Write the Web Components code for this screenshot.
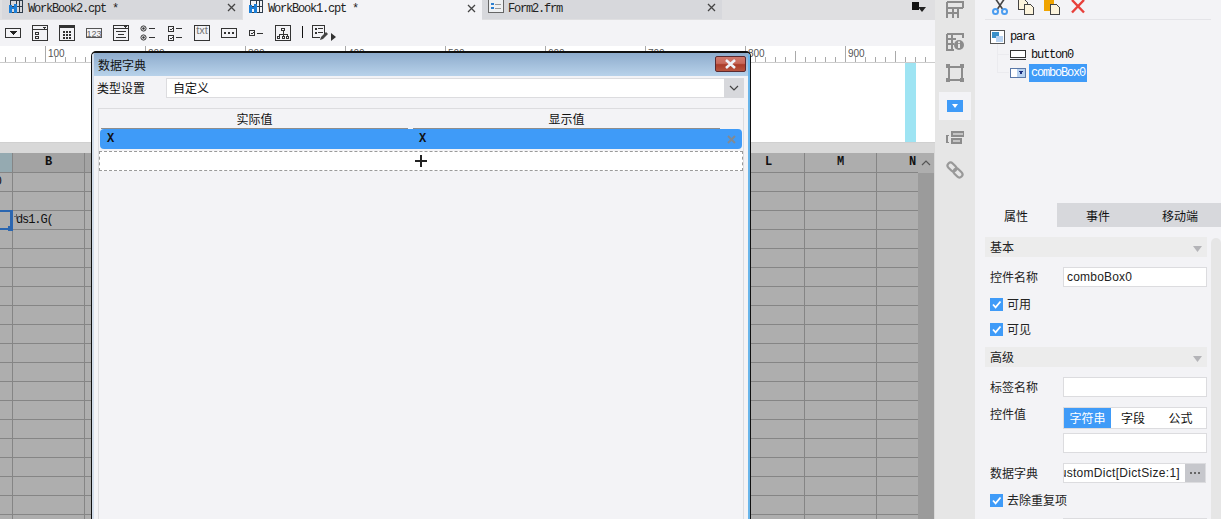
<!DOCTYPE html>
<html lang="en">
<head>
<meta charset="UTF-8">
<title>FineReport</title>
<style>
    html, body { margin: 0; height: 519px; overflow: hidden; background: #f3f3f6; }
</style>
</head>
<body>
<app-shell>
    <main-area slot="main">
        <tab-bar>
            <doc-tab title="WorkBook2.cpt *" kind="cpt"></doc-tab>
            <doc-tab title="WorkBook1.cpt *" kind="cpt" active></doc-tab>
            <doc-tab title="Form2.frm" kind="frm"></doc-tab>
        </tab-bar>
        <widget-toolbar></widget-toolbar>
        <ruler-bar></ruler-bar>
        <form-canvas></form-canvas>
        <sheet-grid></sheet-grid>
    </main-area>
    <side-rail slot="rail"></side-rail>
    <right-panel slot="right">
        <tree-tools></tree-tools>
        <widget-tree></widget-tree>
        <prop-tabs></prop-tabs>
        <prop-body>
            <prop-header>基本</prop-header>
            <prop-row label="控件名称" style="margin-top:10px"><prop-input value="comboBox0"></prop-input></prop-row>
            <check-row style="margin-top:7px">可用</check-row>
            <check-row style="margin-top:5px">可见</check-row>
            <prop-header style="margin-top:8px">高级</prop-header>
            <prop-row label="标签名称" style="margin-top:10px"><prop-input></prop-input></prop-row>
            <prop-row label="控件值" style="margin-top:10px">
                <seg-switch></seg-switch>
                <prop-input></prop-input>
            </prop-row>
            <prop-row label="数据字典" style="margin-top:10px"><dict-input value="customDict[DictSize:1]"></dict-input></prop-row>
            <check-row style="margin-top:7px">去除重复项</check-row>
            <prop-row label="" style="margin-top:8px"><prop-input></prop-input></prop-row>
        </prop-body>
    </right-panel>
    <dict-dialog slot="over"></dict-dialog>
</app-shell>

<script>
    const CJK = '"Noto Sans CJK SC", "Liberation Sans", sans-serif';
    const MONO = '"Liberation Mono", "Noto Sans CJK SC", monospace';
    const SANS = '"Liberation Sans", sans-serif';

    // every element here is just markup + styles, so one small base class does it
    class Part extends HTMLElement {
        constructor() {
            super();
            this.attachShadow({mode: 'open'});
        }
        connectedCallback() {
            this.shadowRoot.innerHTML = '<style>' + this.css() + '</style>' + this.html();
        }
        css() { return ':host{display:block}'; }
        html() { return '<slot></slot>'; }
        attr(name) { return this.getAttribute(name) || ''; }
    }

    const svg = (w, h, body, extra) => `<svg width="${w}" height="${h}" viewBox="0 0 ${w} ${h}" ${extra || ''}>${body}</svg>`;

    class AppShell extends Part {
        css() {
            return `:host{display:grid;grid-template-columns:935px 40px 246px;width:1221px;height:519px;overflow:hidden;position:relative}
            .over{position:absolute;left:91px;top:51px}`;
        }
        html() {
            return `<slot name="main"></slot><slot name="rail"></slot><slot name="right"></slot><div class="over"><slot name="over"></slot></div>`;
        }
    }

    class MainArea extends Part {
        css() { return `:host{display:flex;flex-direction:column;height:519px;overflow:hidden;background:#f3f3f6}`; }
    }

    class TabBar extends Part {
        css() { return `:host{display:flex;height:20px;padding-left:2px;background:#dfdfe1;position:relative;font:12px ${MONO}}
            .corner{position:absolute;left:912px;top:2px}`; }
        html() {
            return `<slot></slot><div class="corner">${svg(14, 10, '<rect x="0" y="0" width="7" height="8" fill="#111"/><path d="M6 5h8l-4 5z" fill="#222"/>')}</div>`;
        }
    }

    class DocTab extends Part {
        css() {
            return `:host{display:flex;align-items:center;width:240px;height:19px;background:#d7d8dc;color:#222;position:relative;overflow:hidden}
            :host([active]){background:#f3f3f6;height:20px;margin-left:1px;width:239px}
            :host([active]) .ico{margin-left:5px}
            .ico{width:16px;height:16px;margin:-4px 4px 0 6px;flex:none}
            .t{font:12px ${MONO};letter-spacing:-1.2px;white-space:pre;margin-top:-2px}
            .x{margin-left:auto;margin-right:6px;margin-top:-1px;flex:none}`;
        }
        html() {
            const cpt = `<g shape-rendering="crispEdges"><path d="M2.5 -2V12M2.5 .5H14.5V12.5H2.5M8.5 -2V12.5M2.5 6.5H14.5M11.5 0V12.5" fill="none" stroke="#2f3d4c"/>
                <rect x="1" y="5" width="3" height="8" fill="#1c7ed6"/><rect x="6" y="4" width="3" height="9" fill="#1c7ed6"/><rect x="4" y="7" width="2" height="2" fill="#1c7ed6"/></g>`;
            const frm = `<g shape-rendering="crispEdges"><rect x=".5" y="-1" width="15" height="13.5" fill="#eef0f2" stroke="#666"/><rect x="3" y="3" width="3" height="2" fill="#2b7fd0"/><rect x="3" y="7" width="3" height="2" fill="#2b7fd0"/><path d="M7 4h6M7 8h6" stroke="#999"/></g>`;
            const close = svg(9, 9, '<path d="M1 1l7 7M8 1l-7 7" stroke="#444" stroke-width="1.3" fill="none"/>');
            return `<span class="ico">${svg(16, 16, this.attr('kind') === 'cpt' ? cpt : frm)}</span>
                <span class="t">${this.attr('title')}</span><span class="x">${close}</span>`;
        }
    }

    class WidgetToolbar extends Part {
        css() {
            return `:host{display:flex;align-items:center;gap:11px;height:26px;padding-left:5px;background:#f3f3f6}
            svg{display:block;flex:none} text{font-family:${SANS}}
            .sep{width:1px;height:12px;background:#111;margin-right:-2px;margin-top:-2px}
            .more{margin-left:-8px;margin-top:8px}`;
        }
        html() {
            const s = 'fill="none" stroke="#333"';
            const ic = (b) => svg(16, 16, `<g shape-rendering="crispEdges">${b}</g>`);
            const dots = [3, 6, 9].map(y => [4, 7, 10].map(x => `<rect x="${x}" y="${y + 3}" width="2" height="2" fill="#333"/>`).join('')).join('');
            return [
                ic(`<rect x=".5" y="3.5" width="15" height="9" ${s}/><path d="M5 6h7l-3.5 4z" fill="#222"/>`),
                ic(`<rect x=".5" y=".5" width="15" height="15" ${s}/><path d="M1 4.5h14" ${s}/><path d="M10 2h4l-2 2z" fill="#333"/><rect x="3.5" y="7.5" width="3" height="2" ${s}/><rect x="3.5" y="11.5" width="3" height="2" ${s}/>`),
                ic(`<rect x=".5" y=".5" width="15" height="15" ${s}/><rect x="1" y="1" width="14" height="2" fill="#333"/>${dots}`),
                ic(`<rect x=".5" y="3.5" width="15" height="9" fill="none" stroke="#555"/>`).replace('</svg>', `<text x="8" y="11.5" font-size="9" text-anchor="middle" fill="#666">123</text></svg>`),
                ic(`<rect x=".5" y=".5" width="15" height="15" ${s}/><path d="M1 3.5h14" ${s}/><path d="M10 1h4l-2 2z" fill="#333"/><path d="M3 6.5h10M5 9.5h6M3 12.5h10" ${s}/>`),
                svg(16, 16, `<circle cx="3.5" cy="3.5" r="2.6" ${s}/><circle cx="3.5" cy="3.5" r="1.2" fill="#333"/><circle cx="3.5" cy="12.5" r="2.6" ${s}/><circle cx="3.5" cy="12.5" r="1.2" fill="#333"/><path d="M9 3.5h6M9 12.5h6" stroke="#333" shape-rendering="crispEdges"/>`),
                ic(`<rect x="1.5" y="1.5" width="5" height="5" ${s}/><rect x="1.5" y="10.5" width="5" height="5" ${s}/><path d="M3 4l1 1 2-2M3 13l1 1 2-2" ${s}/><path d="M9 3.5h6M9 12.5h6" ${s}/>`),
                ic(`<rect x=".5" y=".5" width="15" height="15" ${s}/>`).replace('</svg>', `<text x="8" y="9" font-size="11" text-anchor="middle" fill="#777">txt</text></svg>`),
                ic(`<rect x=".5" y="3.5" width="15" height="9" ${s}/><rect x="3" y="7" width="2" height="2" fill="#333"/><rect x="7" y="7" width="2" height="2" fill="#333"/><rect x="11" y="7" width="2" height="2" fill="#333"/>`),
                ic(`<rect x="1.5" y="5.5" width="5" height="5" ${s}/><path d="M3 8l1 1 2-2" ${s}/><path d="M9 8.5h6" ${s}/>`),
                ic(`<rect x=".5" y=".5" width="15" height="15" ${s}/><rect x="6.5" y="3.5" width="3" height="2" ${s}/><path d="M8 6v3M4 9h8M4 9v2M8 9v2M12 9v2" ${s}/><rect x="2.5" y="11.5" width="2" height="2" ${s}/><rect x="7" y="11.5" width="2" height="2" ${s}/><rect x="11.5" y="11.5" width="2" height="2" ${s}/>`),
                `<span class="sep"></span>`,
                ic(`<path d="M12.5 9V.5H.5V12.5H8" ${s}/><rect x="3" y="3" width="2" height="2" fill="#333"/><rect x="3" y="7" width="2" height="2" fill="#333"/><path d="M6 3.5h5M6 7.5h5" ${s}/>`).replace('</svg>', `<path d="M8 15l1-3 5-5 2 2-5 5z" fill="#444"/></svg>`),
                `<span class="more">${svg(5, 8, '<path d="M0 0l5 4-5 4z" fill="#333"/>')}</span>`
            ].join('');
        }
    }

    class RulerBar extends Part {
        css() {
            return `:host{display:flex;height:17px;box-sizing:border-box;padding-left:48px;background-color:#fff;
                background-image:linear-gradient(90deg,#aaa 1px,transparent 1px),linear-gradient(90deg,#aaa 1px,transparent 1px),linear-gradient(90deg,#aaa 1px,transparent 1px),linear-gradient(#ccc,#ccc);
                background-size:10px 5px,100px 11px,100px 16px,100% 1px;
                background-position:5px 11px,95px 5px,45px 0,0 16px;
                background-repeat:repeat-x;font:10px ${SANS};color:#555;overflow:hidden}
            span{flex:none;width:100px;line-height:11px;padding-top:2px}`;
        }
        html() { return [100, 200, 300, 400, 500, 600, 700, 800, 900].map(n => `<span>${n}</span>`).join(''); }
    }

    class FormCanvas extends Part {
        css() {
            return `:host{display:flex;height:80px;box-sizing:border-box;background:#fff;border-bottom:1px solid #d0d0d0;padding-left:905px}
            i{display:block;width:11px;background:#9ee4f3}`;
        }
        html() { return '<i></i>'; }
    }

    class SheetGrid extends Part {
        css() {
            return `:host{display:flex;flex:1;min-height:0;background:#d8d8d8;padding-top:10px;overflow:hidden}
            .clip{width:918px;overflow:hidden;flex:none}
            .g{display:grid;grid-template-columns:repeat(14,72px);grid-template-rows:20px;grid-auto-rows:19px;margin-left:-59px;width:1008px;font:12px ${MONO};color:#111}
            .c{box-sizing:border-box;border-right:1px solid #858585;border-bottom:1px solid #858585;background:#aeaeae;position:relative;white-space:pre;line-height:18px;overflow:visible}
            .h{background:#a3a3a3;text-align:center;font-weight:bold;line-height:19px}
            .h.lt{background:#adadad}
            .h.a{background:#95aab1}
            .txt{position:absolute;left:3px;top:0;letter-spacing:-1.1px}
            .a0{position:absolute;right:10px;top:0}
            .sel{position:absolute;left:-4px;right:-1px;top:-1px;bottom:-1px;border:solid #2b66b0;border-width:2px 3px 2px 0;z-index:2}
            .hd{position:absolute;right:-3px;bottom:-3px;width:5px;height:5px;background:#2b66b0}
            .mk{position:absolute;left:1px;top:3px;width:5px;height:5px;z-index:3;
                background:linear-gradient(#666,#666) 2px 0/1px 5px no-repeat,linear-gradient(#666,#666) 0 2px/5px 1px no-repeat}
            .bar{width:16px;flex:none;background:#9b9b9b;margin-right:1px}
            .up{display:flex;align-items:center;justify-content:center;height:20px;background:#aeaeae}`;
        }
        html() {
            let cells = '';
            const letters = ' BCDEFGHIJKLMN';
            for (let i = 0; i < 14; i++) {
                const cls = i === 0 ? 'a' : (i > 10 ? 'lt' : '');
                cells += `<div class="c h ${cls}">${letters[i]}</div>`;
            }
            for (let r = 0; r < 19; r++) {
                for (let c = 0; c < 14; c++) {
                    let inner = '';
                    if (r === 0 && c === 0) inner = '<span class="a0">0</span>';
                    if (r === 2 && c === 0) inner = '<div class="sel"><div class="hd"></div></div>';
                    if (r === 2 && c === 1) inner = '<div class="mk"></div><span class="txt">ds1.G(</span>';
                    cells += `<div class="c">${inner}</div>`;
                }
            }
            return `<div class="clip"><div class="g">${cells}</div></div>
                <div class="bar"><div class="up">${svg(10, 6, '<path d="M1 5l4-4 4 4" fill="none" stroke="#555" stroke-width="1.2"/>')}</div></div>`;
        }
    }

    class SideRail extends Part {
        css() {
            return `:host{display:flex;flex-direction:column;align-items:center;height:519px;background:#e6e6e6;box-sizing:border-box}
            .i{display:flex;align-items:center;justify-content:center;width:32px;flex:none}
            .on{background:#f3f3f6}
            svg{display:block}`;
        }
        html() {
            const s = 'fill="none" stroke="#8c8c8c" stroke-width="2"';
            const item = (h, body) => `<div class="i" style="height:${h}px">${svg(18, 18, body)}</div>`;
            return item(20, `<g shape-rendering="crispEdges"><path d="M1 1V17M1 1H17V7M1 7H17M1 12H12M7 7V17M12 7V17" ${s}/></g>`)
                + item(44, `<g shape-rendering="crispEdges"><path d="M1 1H17V5M1 1V17H8M1 6H10M1 11H8M6 1V17" ${s}/></g><circle cx="13" cy="12" r="5" fill="#8c8c8c"/><rect x="12" y="11" width="2" height="4" fill="#e6e6e6"/><rect x="12" y="8.5" width="2" height="1.6" fill="#e6e6e6"/>`)
                + item(18, `<g shape-rendering="crispEdges"><rect x="2.5" y="2.5" width="13" height="13" ${s}/><rect x="0" y="0" width="4" height="4" fill="#8c8c8c"/><rect x="14" y="0" width="4" height="4" fill="#8c8c8c"/><rect x="0" y="14" width="4" height="4" fill="#8c8c8c"/><rect x="14" y="14" width="4" height="4" fill="#8c8c8c"/></g>`)
                + `<div style="height:10px;flex:none"></div>`
                + `<div class="i on" style="height:28px">${svg(16, 12, '<rect width="16" height="12" fill="#3f9bf8"/><path d="M5 4h6l-3 4z" fill="#fff"/>')}</div>`
                + `<div style="height:9px;flex:none"></div>`
                + item(18, `<g shape-rendering="crispEdges"><path d="M3 6.5H.8V13.5H3" fill="none" stroke="#8c8c8c" stroke-width="1.4"/><rect x="6" y="3" width="12" height="4" fill="#c4c4c4" stroke="#8c8c8c" stroke-width="2"/><rect x="6" y="10" width="9" height="4" fill="#c4c4c4" stroke="#8c8c8c" stroke-width="2"/></g>`)
                + `<div style="height:14px;flex:none"></div>`
                + item(18, `<g fill="none" stroke="#999" stroke-width="2.2"><rect x="1" y="3" width="10" height="6" rx="3" transform="rotate(45 6 6)"/><rect x="7" y="9" width="10" height="6" rx="3" transform="rotate(45 12 12)"/></g>`);
        }
    }

    class RightPanel extends Part {
        css() { return `:host{display:flex;flex-direction:column;height:519px;background:#f3f3f6;overflow:hidden}`; }
    }

    class TreeTools extends Part {
        css() {
            return `:host{display:flex;gap:10px;height:19px;margin:0 10px;padding-left:7px;border-bottom:1px solid #e4e4e8;align-items:flex-start;overflow:hidden}
            svg{display:block;flex:none}`;
        }
        html() {
            const doc = (x, y) => `<path d="M${x + .5} ${y + .5}h6l3 3v7h-9z" fill="#fdf4dc" stroke="#444"/>`;
            return svg(16, 15, '<path d="M3 -2l7.5 11M13 -2L5.5 9" stroke="#444" stroke-width="1.6" fill="none"/><circle cx="3.5" cy="11.5" r="2.5" fill="none" stroke="#4a9cf0" stroke-width="2"/><circle cx="12.5" cy="11.5" r="2.5" fill="none" stroke="#4a9cf0" stroke-width="2"/>')
                + svg(16, 15, `<g shape-rendering="crispEdges">${doc(0, -1)}${doc(6, 4)}</g>`)
                + svg(16, 15, `<g shape-rendering="crispEdges"><rect x="0" y="0" width="10" height="11" fill="#f0a400"/>${doc(6, 4)}</g>`)
                + `<span style="margin-left:1px">${svg(14, 14, '<path d="M1 0l12 12.5M13 0L1 12.5" stroke="#e8403a" stroke-width="2.4" fill="none"/>')}</span>`;
        }
    }

    class WidgetTree extends Part {
        css() {
            return `:host{display:block;height:183px;box-sizing:border-box;padding:9px 0 0 15px;position:relative;font:12px ${MONO};color:#111}
            .r{display:flex;align-items:center;height:18px;white-space:pre}
            .r span{letter-spacing:-1.2px;padding:0 2px;line-height:18px}
            svg{display:block;flex:none}
            .lv2{padding-left:20px}
            .lv2 svg{margin-right:3px}
            .top svg{margin-right:5px}
            .top{height:16px;margin-bottom:1px}
            .top span{padding:0}
            .sel{background:#3f9bf8;color:#fff;width:58px;box-sizing:border-box}
            .guide{position:absolute;left:22px;top:24px;width:11px;height:29px;border-left:1px solid #ebebef}
            .guide:before,.guide:after{content:"";position:absolute;left:0;width:11px;border-top:1px solid #ebebef}
            .guide:before{top:10px}.guide:after{top:28px}`;
        }
        html() {
            return `<div class="guide"></div>
            <div class="r top">${svg(15, 15, '<g shape-rendering="crispEdges"><rect x=".5" y=".5" width="14" height="13" fill="#fff" stroke="#555"/><rect x="2" y="2" width="7" height="6" fill="#3a8fc8"/><rect x="6" y="6" width="7" height="6" fill="#b8d2f0"/></g>')}<span>para</span></div>
            <div class="r lv2">${svg(16, 11, '<g shape-rendering="crispEdges"><rect x=".5" y=".5" width="15" height="7" fill="#fff" stroke="#333"/><path d="M0 9.5h16" stroke="#333"/></g>')}<span>button0</span></div>
            <div class="r lv2">${svg(16, 11, '<g shape-rendering="crispEdges"><rect x=".5" y=".5" width="15" height="9" fill="#fff" stroke="#5a78a8"/><rect x="7" y="1" width="8" height="8" fill="#b8d2f0"/><path d="M8.5 3h5l-2.5 3.5z" fill="#1c2f80"/></g>')}<span class="sel">comboBox0</span></div>`;
        }
    }

    class PropTabs extends Part {
        css() {
            return `:host{display:grid;grid-template-columns:82px 82px 82px;height:24px;font:12px ${CJK};color:#111}
            div{display:flex;align-items:center;justify-content:center;background:#d7d8dc}
            .on{background:#f3f3f6}`;
        }
        html() { return '<div class="on">属性</div><div>事件</div><div>移动端</div>'; }
    }

    class PropBody extends Part {
        css() {
            return `:host{display:flex;flex:1;padding:10px 0 0 10px;gap:4px;min-height:0;overflow:hidden;font:12px ${CJK};color:#222}
            .col{width:222px;flex:none}
            .sb{width:10px;flex:none;margin-top:1px;background:#e6e6e6;border-radius:5px 5px 0 0;height:300px}`;
        }
        html() { return '<div class="col"><slot></slot></div><div class="sb"></div>'; }
    }

    class PropHeader extends Part {
        css() {
            return `:host{display:flex;align-items:center;justify-content:space-between;height:20px;box-sizing:border-box;padding:0 5px 2px 5px;background:#ececec}
            svg{display:block;margin-top:6px}`;
        }
        html() { return `<slot></slot>${svg(9, 6, '<path d="M0 0h9l-4.5 6z" fill="#b4b4b8"/>')}`; }
    }

    class PropRow extends Part {
        css() {
            return `:host{display:grid;grid-template-columns:73px 144px;padding-left:5px}
            .l{line-height:14px;padding-top:3px;white-space:nowrap}
            :host([label="控件值"]) .l{padding-top:0}
            .f{display:flex;flex-direction:column;gap:4px}`;
        }
        html() { return `<div class="l">${this.attr('label')}</div><div class="f"><slot></slot></div>`; }
    }

    class PropInput extends Part {
        css() {
            return `:host{display:block;height:20px;box-sizing:border-box;background:#fff;border:1px solid #dcdcdf;font:12px ${SANS};color:#222;letter-spacing:.2px;line-height:18px;padding-left:3px;overflow:hidden;white-space:nowrap}`;
        }
        html() { return this.attr('value'); }
    }

    class DictInput extends Part {
        css() {
            return `:host{display:flex;height:20px;width:143px;box-sizing:border-box;border:1px solid #dcdcdf;background:#fff;font:12px ${SANS};color:#222;letter-spacing:.3px}
            .t{flex:1;min-width:0;display:flex;justify-content:flex-end;overflow:hidden;white-space:nowrap;line-height:18px;padding:0 5px 0 2px}
            .b{width:20px;flex:none;background:#c6c7cc;display:flex;align-items:center;justify-content:center;gap:2px}
            .b i{width:2px;height:2px;background:#666}`;
        }
        html() { return `<div class="t"><span>${this.attr('value')}</span></div><div class="b"><i></i><i></i><i></i></div>`; }
    }

    class SegSwitch extends Part {
        css() {
            return `:host{display:grid;grid-template-columns:47px 44px 1fr;height:22px;box-sizing:border-box;border:1px solid #dcdcdf;background:#fff;color:#111;font:12px ${CJK}}
            div{display:flex;align-items:center;justify-content:center;padding-bottom:1px}
            .on{background:#3f9bf8;color:#fff}`;
        }
        html() { return '<div class="on">字符串</div><div>字段</div><div>公式</div>'; }
    }

    class CheckRow extends Part {
        css() {
            return `:host{display:flex;align-items:center;gap:4px;height:20px;padding-left:5px;line-height:18px}
            svg{display:block;flex:none}
            span{display:block;margin-top:-1px}`;
        }
        html() {
            return `${svg(13, 13, '<rect width="13" height="13" fill="#3f9bf8"/><path d="M3 6.5l2.6 2.8L10.5 3.5" fill="none" stroke="#fff" stroke-width="1.8"/>')}<span><slot></slot></span>`;
        }
    }

    class DictDialog extends Part {
        css() {
            return `:host{display:block;width:660px;height:500px;box-sizing:border-box;background:#f3f3f6;border:solid #111;border-width:2px 1px 0 1px;border-radius:5px 5px 0 0;font:12px ${CJK};color:#111;overflow:hidden}
            .frame{height:100%;box-sizing:border-box;border-left:2px solid #d3ddea;border-right:2px solid #69b5ea}
            .title{display:flex;align-items:center;justify-content:space-between;height:23px;padding:0 2px 0 4px;background:linear-gradient(#8eaccd,#b8d2ea)}
            .close{display:flex;align-items:center;justify-content:center;width:31px;height:16px;box-sizing:border-box;margin-top:-2px;border:1px solid #5a2a30;border-radius:2px;background:linear-gradient(#d0786c 0,#c96a5c 45%,#aa3c2a 55%,#b8543f 100%)}
            .close svg{display:block}
            .type{display:flex;align-items:center;height:21px;margin-top:1px;padding:0 4px 0 3px}
            .type label{width:69px;flex:none}
            .sel{flex:1;display:flex;height:20px;box-sizing:border-box;border:1px solid #dcdcdf;background:#fff;align-items:center;padding-left:6px;justify-content:space-between;position:relative}
            .dd{position:absolute;right:-1px;top:-1px;bottom:-1px;width:20px;background:#d7d8dc;display:flex;align-items:center;justify-content:center}
            .tbl{margin:10px 4px 0 4px;height:500px;border:1px solid #dcdcdf;box-sizing:border-box;padding:0 1px}
            .head{display:grid;grid-template-columns:312px 312px;height:20px;text-align:center;line-height:20px}
            .head span{display:block;border-bottom:1px solid #8d8d8d;box-sizing:border-box;height:20px;margin:0 4px 0 1px}
            .row{display:grid;grid-template-columns:312px 1fr;align-items:center;height:20px;background:#3f9bf8;color:#111;border-radius:4px;font:bold 12px ${MONO};position:relative}
            .row span{padding-left:7px}
            .del{position:absolute;right:6px;top:5px}
            .add{display:flex;align-items:center;justify-content:center;height:20px;margin:2px -1px 0 -1px;box-sizing:border-box;border:1px dashed #9a9a9a;background:#fff}`;
        }
        html() {
            return `<div class="frame">
                <div class="title"><span>数据字典</span><span class="close">${svg(15, 10, '<path d="M3 1l9 8M12 1l-9 8" stroke="#eef2fa" stroke-width="2.6" fill="none"/>')}</span></div>
                <div class="type"><label>类型设置</label><div class="sel"><span>自定义</span><span class="dd">${svg(10, 6, '<path d="M1 1l4 4 4-4" fill="none" stroke="#444" stroke-width="1.2"/>')}</span></div></div>
                <div class="tbl">
                    <div class="head"><span>实际值</span><span>显示值</span></div>
                    <div class="row"><span>X</span><span>X</span><i class="del">${svg(9, 9, '<path d="M1 1l7 7M8 1l-7 7" stroke="#808a94" stroke-width="2" fill="none"/>')}</i></div>
                    <div class="add">${svg(12, 12, '<path d="M6 0v12M0 6h12" stroke="#222" stroke-width="1.6" shape-rendering="crispEdges"/>')}</div>
                </div>
            </div>`;
        }
    }

    customElements.define('app-shell', AppShell);
    customElements.define('main-area', MainArea);
    customElements.define('tab-bar', TabBar);
    customElements.define('doc-tab', DocTab);
    customElements.define('widget-toolbar', WidgetToolbar);
    customElements.define('ruler-bar', RulerBar);
    customElements.define('form-canvas', FormCanvas);
    customElements.define('sheet-grid', SheetGrid);
    customElements.define('side-rail', SideRail);
    customElements.define('right-panel', RightPanel);
    customElements.define('tree-tools', TreeTools);
    customElements.define('widget-tree', WidgetTree);
    customElements.define('prop-tabs', PropTabs);
    customElements.define('prop-body', PropBody);
    customElements.define('prop-header', PropHeader);
    customElements.define('prop-row', PropRow);
    customElements.define('prop-input', PropInput);
    customElements.define('dict-input', DictInput);
    customElements.define('seg-switch', SegSwitch);
    customElements.define('check-row', CheckRow);
    customElements.define('dict-dialog', DictDialog);
</script>
</body>
</html>
